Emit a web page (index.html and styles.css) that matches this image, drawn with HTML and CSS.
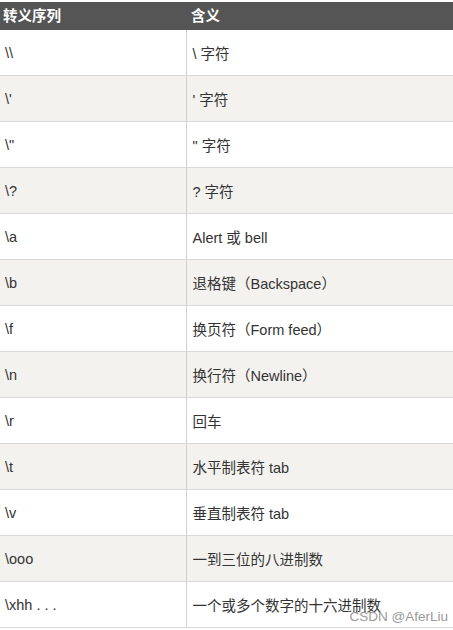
FILE: index.html
```html
<!DOCTYPE html>
<html>
<head>
<meta charset="utf-8">
<link rel="stylesheet" href="styles.css">
</head>
<body>
<div class="page">
<table class="esc">
<thead>
<tr><th class="c1">转义序列</th><th class="c2">含义</th></tr>
</thead>
<tbody>
<tr><td>\\</td><td>\ 字符</td></tr>
<tr><td>\'</td><td>' 字符</td></tr>
<tr><td>\"</td><td>" 字符</td></tr>
<tr><td>\?</td><td>? 字符</td></tr>
<tr><td>\a</td><td>Alert 或 bell</td></tr>
<tr><td>\b</td><td>退格键（Backspace）</td></tr>
<tr><td>\f</td><td>换页符（Form feed）</td></tr>
<tr><td>\n</td><td>换行符（Newline）</td></tr>
<tr><td>\r</td><td>回车</td></tr>
<tr><td>\t</td><td>水平制表符 tab</td></tr>
<tr><td>\v</td><td>垂直制表符 tab</td></tr>
<tr><td>\ooo</td><td>一到三位的八进制数</td></tr>
<tr><td>\xhh . . .</td><td>一个或多个数字的十六进制数</td></tr>
</tbody>
</table>
<div class="mark">CSDN @AferLiu</div>
</div>
</body>
</html>
```
FILE: styles.css
```css
html, body {
  margin: 0;
  padding: 0;
  background: #fff;
}
.page {
  position: relative;
  width: 453px;
  height: 630px;
  padding-top: 2px;
  box-sizing: border-box;
  font-family: "Liberation Sans", Arial, "Noto Sans CJK SC", sans-serif;
}
.esc {
  width: 453px;
  border-collapse: collapse;
  table-layout: fixed;
}
.esc th {
  background: #555555;
  color: #fff;
  font-weight: bold;
  font-size: 14.5px;
  text-align: left;
  height: 28px;
  padding: 0 0 0 3px;
  line-height: 28px;
}
.esc th.c1 { width: 183px; }
.esc th.c2 { padding-left: 5px; }
.esc td {
  height: 45px;
  padding: 0 0 0 5px;
  font-size: 14.5px;
  color: #333;
  border-bottom: 1px solid #d8d8d8;
  vertical-align: middle;
}
.esc td:first-child {
  border-right: 1px solid #d0d0d0;
  padding-left: 5px;
}
.esc td:last-child {
  padding-left: 6px;
}
.esc tbody tr:nth-child(even) td {
  background: #f3f2ef;
}
.mark {
  position: absolute;
  right: 5px;
  bottom: 6px;
  font-size: 13.5px;
  line-height: 14px;
  color: #9a9a9a;
}
```
